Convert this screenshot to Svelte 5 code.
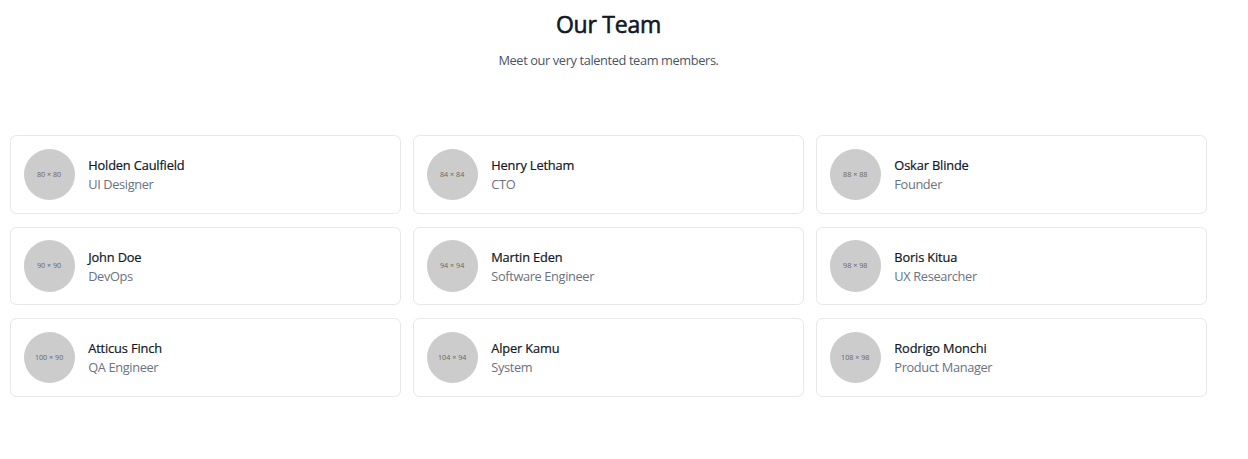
<script>
  const members = [
    { name: 'Holden Caulfield', role: 'UI Designer', size: '80 × 80' },
    { name: 'Henry Letham', role: 'CTO', size: '84 × 84' },
    { name: 'Oskar Blinde', role: 'Founder', size: '88 × 88' },
    { name: 'John Doe', role: 'DevOps', size: '90 × 90' },
    { name: 'Martin Eden', role: 'Software Engineer', size: '94 × 94' },
    { name: 'Boris Kitua', role: 'UX Researcher', size: '98 × 98' },
    { name: 'Atticus Finch', role: 'QA Engineer', size: '100 × 90' },
    { name: 'Alper Kamu', role: 'System', size: '104 × 94' },
    { name: 'Rodrigo Monchi', role: 'Product Manager', size: '108 × 98' }
  ];
</script>

<section>
  <header>
    <h1>Our Team</h1>
    <p>Meet our very talented team members.</p>
  </header>
  <div class="grid">
    {#each members as m}
      <article>
        <div class="avatar"><span>{m.size}</span></div>
        <div class="info">
          <h2>{m.name}</h2>
          <p>{m.role}</p>
        </div>
      </article>
    {/each}
  </div>
</section>

<style>
  :global(body) {
    background: #fff;
  }
  section {
    box-sizing: border-box;
    width: 1217px;
    height: 459px;
    padding: 9.6px 10px 0;
    font-family: 'Segoe UI', 'Open Sans', sans-serif;
  }
  h1, h2, p {
    margin: 0;
  }
  header {
    height: 125.4px;
    text-align: center;
  }
  h1 {
    font-size: 23px;
    line-height: 29px;
    font-weight: 500;
    letter-spacing: -0.25px;
    color: #111827;
    -webkit-text-stroke: 0.6px #111827;
  }
  header p {
    margin-top: 11px;
    font-size: 12.8px;
    line-height: 20px;
    letter-spacing: -0.38px;
    color: #4b5563;
  }
  .grid {
    display: grid;
    grid-template-columns: repeat(3, 1fr);
    gap: 12.8px 12.2px;
  }
  article {
    box-sizing: border-box;
    height: 78.8px;
    padding: 0 13px;
    display: flex;
    align-items: center;
    gap: 13px;
    border: 1px solid #e5e7eb;
    border-radius: 6.4px;
  }
  .avatar {
    width: 51.2px;
    height: 51.2px;
    flex: none;
    display: flex;
    align-items: center;
    justify-content: center;
    border-radius: 50%;
    background: #ccc;
    color: #666;
    font: 400 7.2px/10px 'Open Sans', sans-serif;
    white-space: nowrap;
  }
  .avatar span {
    padding: 0 1px 1px 0;
  }
  .info {
    padding-top: 1.5px;
  }
  h2 {
    font-size: 12.8px;
    line-height: 19.2px;
    font-weight: 500;
    letter-spacing: -0.14px;
    color: #111827;
    -webkit-text-stroke: 0.22px #111827;
  }
  .info p {
    font-size: 12.8px;
    line-height: 19.2px;
    letter-spacing: -0.36px;
    color: #6b7280;
  }
</style>
